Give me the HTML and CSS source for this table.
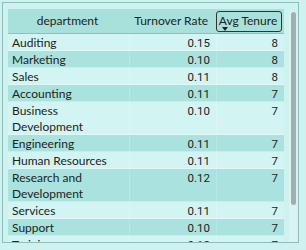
FILE: index.html
```html
<!DOCTYPE html>
<html>
<head>
<meta charset="utf-8">
<link rel="stylesheet" href="styles.css">
</head>
<body>
<div class="frame">
  <div class="table">
    <div class="row head">
      <div class="cell c1 hcenter">department</div>
      <div class="cell c2">Turnover Rate</div>
      <div class="cell c3"><span class="sortbox">Avg Tenure<span class="tri"></span></span></div>
    </div>
    <div class="body">
      <div class="row odd"><div class="cell c1">Auditing</div><div class="cell c2 num">0.15</div><div class="cell c3 num">8</div></div>
      <div class="row even"><div class="cell c1">Marketing</div><div class="cell c2 num">0.10</div><div class="cell c3 num">8</div></div>
      <div class="row odd"><div class="cell c1">Sales</div><div class="cell c2 num">0.11</div><div class="cell c3 num">8</div></div>
      <div class="row even"><div class="cell c1">Accounting</div><div class="cell c2 num">0.11</div><div class="cell c3 num">7</div></div>
      <div class="row odd"><div class="cell c1">Business Development</div><div class="cell c2 num">0.10</div><div class="cell c3 num">7</div></div>
      <div class="row even"><div class="cell c1">Engineering</div><div class="cell c2 num">0.11</div><div class="cell c3 num">7</div></div>
      <div class="row odd"><div class="cell c1">Human Resources</div><div class="cell c2 num">0.11</div><div class="cell c3 num">7</div></div>
      <div class="row even"><div class="cell c1">Research and Development</div><div class="cell c2 num">0.12</div><div class="cell c3 num">7</div></div>
      <div class="row odd"><div class="cell c1">Services</div><div class="cell c2 num">0.11</div><div class="cell c3 num">7</div></div>
      <div class="row even"><div class="cell c1">Support</div><div class="cell c2 num">0.10</div><div class="cell c3 num">7</div></div>
      <div class="row odd"><div class="cell c1">Training</div><div class="cell c2 num">0.12</div><div class="cell c3 num">7</div></div>
    </div>
  </div>
  <div class="scroll"><div class="thumb"></div></div>
</div>
</body>
</html>
```
FILE: styles.css
```css
html, body {
  margin: 0;
  padding: 0;
  background: #cff2f0;
}
body {
  width: 306px;
  height: 250px;
  overflow: hidden;
  font-family: "Lato", "Noto Sans", sans-serif;
  font-size: 12px;
  color: #222;
}
.frame {
  position: relative;
  margin: 2px 0 0 2px;
  width: 297px;
  height: 241px;
  border: 1px solid #8fbdba;
  background: #cdf2f0;
  box-sizing: border-box;
  padding: 6px 0 0 5px;
  display: flex;
  overflow: hidden;
}
.table {
  width: 276px;
  display: flex;
  flex-direction: column;
}
.table > * { flex: none; }
.row {
  display: grid;
  grid-template-columns: 121px 87px 68px;
}
.head {
  height: 24px;
  background: #a8e0dc;
  border-bottom: 1px solid #86c3be;
  align-items: center;
  white-space: nowrap;
}
.cell {
  padding: 0 6px 0 4px;
  line-height: 16px;
}
.c2, .c3 {
  text-align: right;
  border-left: 1px solid rgba(255,255,255,0.18);
}
.c3 { padding-right: 6px; }
.head .cell { border-left: none; }
.hcenter { text-align: center; }
.head .c2 { padding-right: 8px; }
.head .c3 { padding: 0 2px 0 0; }
.sortbox {
  position: relative;
  display: inline-block;
  box-sizing: border-box;
  width: 66px;
  height: 21px;
  border: 1px solid #333;
  border-radius: 3px;
  text-align: center;
  line-height: 18px;
  padding-right: 2px;
}
.tri {
  position: absolute;
  left: 5px;
  bottom: 0px;
  width: 0;
  height: 0;
  border-left: 3px solid transparent;
  border-right: 3px solid transparent;
  border-top: 4px solid #222;
}
.body .row {
  padding-top: 1px;
  box-shadow: inset 0 -1px 0 rgba(255,255,255,0.35);
}
.odd { background: #d2f5f3; }
.even { background: #a9e2de; }
.num {
  font-family: "Roboto", "Liberation Sans", sans-serif;
  font-size: 11.5px;
}
.scroll {
  margin-left: 5px;
  width: 8px;
  height: 233px;
  margin-top: 2px;
  background: #d9f4f2;
  border-radius: 4px;
  display: flex;
  justify-content: center;
}
.thumb {
  margin-top: 1px;
  width: 5px;
  height: 193px;
  background: #a3aeae;
  border-radius: 3px;
}
```
